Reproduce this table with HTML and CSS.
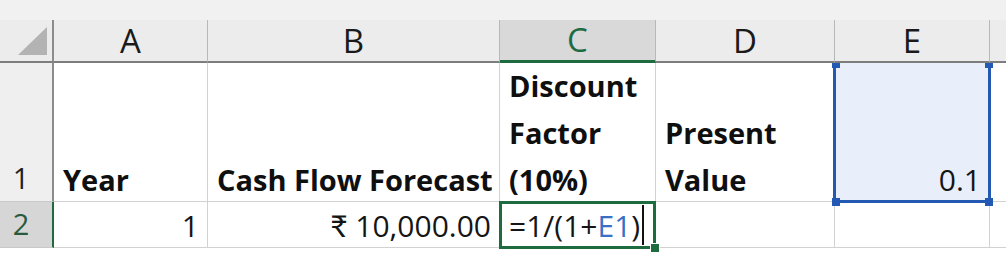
FILE: index.html
```html
<!DOCTYPE html>
<html>
<head>
<meta charset="utf-8">
<link rel="stylesheet" href="styles.css">
</head>
<body>
<div class="sheet">
  <div class="topstrip"></div>

  <div class="corner"><span class="tri"></span></div>
  <div class="colhead">A</div>
  <div class="colhead">B</div>
  <div class="colhead active">C</div>
  <div class="colhead">D</div>
  <div class="colhead">E</div>
  <div class="colhead last"></div>

  <div class="rowhead">1</div>
  <div class="cell bold"><span class="txt">Year</span></div>
  <div class="cell bold"><span class="txt">Cash Flow Forecast</span></div>
  <div class="cell bold"><span class="txt">Discount<br>Factor<br>(10%)</span></div>
  <div class="cell bold"><span class="txt">Present<br>Value</span></div>
  <div class="cell right selected"><span class="txt">0.1</span>
    <span class="h h-tl"></span><span class="h h-tr"></span><span class="h h-bl"></span><span class="h h-br"></span>
  </div>
  <div class="cell last"></div>

  <div class="rowhead active">2</div>
  <div class="cell right"><span class="txt">1</span></div>
  <div class="cell right"><span class="txt">₹ 10,000.00</span></div>
  <div class="cell editing"><span class="txt">=1/(1+<span class="ref">E1</span>)<span class="caret"></span></span><span class="fill"></span></div>
  <div class="cell"></div>
  <div class="cell"></div>
  <div class="cell last"></div>

  <div class="tail"></div>
</div>
</body>
</html>
```

FILE: styles.css
```css
html, body {
  margin: 0;
  padding: 0;
  background: #ffffff;
}

.sheet {
  width: 1006px;
  height: 260px;
  display: grid;
  grid-template-columns: 54px 154px 292px 156px 179px 155px 1fr;
  grid-template-rows: 20px 43px 139px 46px 1fr;
  font-family: "Open Sans", Lato, "DejaVu Sans", sans-serif;
  color: #1b1b1b;
  overflow: hidden;
}

.topstrip {
  grid-column: 1 / -1;
  background: #f1f1f1;
}

.corner {
  background: #ececec;
  border-right: 2px solid #8c8c8c;
  border-bottom: 2px solid #7d7d7d;
  box-sizing: border-box;
  position: relative;
  display: flex;
  align-items: flex-end;
  justify-content: flex-end;
  padding: 0 5px 6px 0;
}

.tri {
  width: 0;
  height: 0;
  border-left: 29px solid transparent;
  border-bottom: 28px solid #b3b3b3;
}

.colhead {
  background: #ececec;
  border-right: 1px solid #b8b8b8;
  border-bottom: 2px solid #7d7d7d;
  box-sizing: border-box;
  display: flex;
  align-items: flex-end;
  justify-content: center;
  font-size: 33px;
  line-height: 40px;
  color: #1a1a1a;
}

.colhead.active {
  background: #d9d9d9;
  color: #1f6b43;
  border-bottom: 3px solid #1d6b3f;
}

.colhead.last {
  border-right: none;
}

.rowhead {
  background: #efefef;
  border-right: 2px solid #8c8c8c;
  border-bottom: 1px solid #c9c9c9;
  box-sizing: border-box;
  display: flex;
  align-items: flex-end;
  justify-content: center;
  padding-right: 10px;
  font-size: 29px;
  line-height: 47px;
  color: #1e1e1e;
}

.rowhead.active {
  background: #d6d6d6;
  color: #2a5a3e;
  border-right: 2px solid #1d6b3f;
}

.cell {
  border-right: 1px solid #d2d2d2;
  border-bottom: 1px solid #d2d2d2;
  box-sizing: border-box;
  display: flex;
  align-items: flex-end;
  padding: 0 8px 0 9px;
  font-size: 30px;
  line-height: 47px;
  position: relative;
  white-space: nowrap;
  color: #151515;
}

.cell .txt {
  margin-bottom: -2px;
}

.cell.bold {
  font-weight: 700;
  font-size: 29px;
  color: #0f0f0f;
}

.cell.right {
  justify-content: flex-end;
}

.cell.last {
  border-right: none;
}

.selected {
  background: #e8eefa;
}

.selected::after {
  content: "";
  position: absolute;
  left: -2px;
  right: -2px;
  top: 0;
  bottom: -2px;
  border: 3px solid #2459b3;
  border-top: none;
}

.h {
  position: absolute;
  width: 8px;
  height: 8px;
  background: #2459b3;
  z-index: 2;
}

.h-tl { left: -3px; top: 0; height: 5px; }
.h-tr { right: -4px; top: 0; height: 5px; }
.h-bl { left: -3px; bottom: -5px; }
.h-br { right: -4px; bottom: -5px; }

.editing::after {
  content: "";
  position: absolute;
  left: -1px;
  right: -1px;
  top: -1px;
  bottom: -2px;
  border: 3px solid #1d6b3f;
}

.ref {
  color: #3a6fc6;
}

.caret {
  display: inline-block;
  width: 2px;
  height: 40px;
  background: #111;
  vertical-align: -8px;
  margin-left: 2px;
}

.fill {
  position: absolute;
  right: -5px;
  bottom: -6px;
  width: 8px;
  height: 8px;
  background: #1d6b3f;
  border: 1px solid #fff;
  z-index: 2;
}

.tail {
  grid-column: 1 / -1;
  background: #fff;
}
```
